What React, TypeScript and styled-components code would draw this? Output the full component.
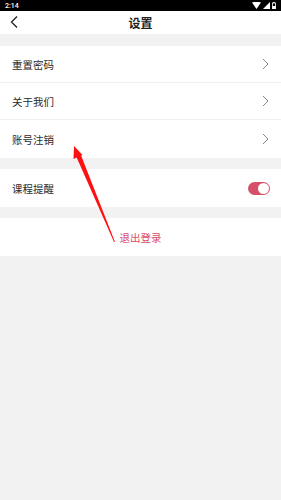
import React from "react";
import styled, { createGlobalStyle } from "styled-components";

const Global = createGlobalStyle`
  html, body { margin: 0; padding: 0; background: #f2f2f2; }
  body { font-family: "Noto Sans CJK SC", "Noto Sans", sans-serif; }
`;

const Page = styled.div`
  position: relative;
  width: 281px;
  height: 500px;
  background: #f2f2f2;
  overflow: hidden;
`;

const StatusBar = styled.div`
  height: 11px;
  background: #000;
  display: flex;
  align-items: center;
  justify-content: space-between;
  padding: 0 5px 0 5px;
  color: #fff;
  font-family: "Roboto", sans-serif;
  font-size: 7px;
  font-weight: 500;
`;

const StatusIcons = styled.div`
  display: flex;
  align-items: center;
  gap: 2px;
`;

const Header = styled.div`
  position: relative;
  height: 23px;
  background: #fff;
  display: flex;
  align-items: center;
  justify-content: center;
`;

const Title = styled.div`
  font-size: 12px;
  font-weight: 700;
  color: #222;
`;

const Back = styled.div`
  position: absolute;
  left: 10px;
  top: 5px;
  display: flex;
`;

const Gap = styled.div<{ h: number }>`
  height: ${(p) => p.h}px;
`;

const Group = styled.div`
  background: #fff;
`;

const Row = styled.div<{ h?: number; divider?: boolean; center?: boolean }>`
  height: ${(p) => p.h ?? 37}px;
  box-sizing: border-box;
  display: flex;
  align-items: center;
  justify-content: ${(p) => (p.center ? "center" : "space-between")};
  padding: 0 12px;
  border-bottom: ${(p) => (p.divider ? "1px solid #f0f0f0" : "none")};
  background: #fff;
`;

const Label = styled.span`
  font-size: 10.5px;
  color: #2b2b2b;
`;

const Logout = styled.span`
  font-size: 10.5px;
  color: #d94c6c;
`;

const Toggle = styled.div`
  width: 22px;
  height: 13px;
  border-radius: 7px;
  background: #d6506a;
  position: relative;
  margin-right: -1px;
`;

const Knob = styled.div`
  position: absolute;
  right: 1px;
  top: 1px;
  width: 11px;
  height: 11px;
  border-radius: 50%;
  background: #fff;
`;

const Arrow = styled.svg`
  position: absolute;
  left: 0;
  top: 0;
  pointer-events: none;
`;

const Chevron = () => (
  <svg width="7" height="12" viewBox="0 0 7 12">
    <path d="M1 1 L6 6 L1 11" fill="none" stroke="#888" strokeWidth="1" />
  </svg>
);

export default function App() {
  return (
    <>
      <Global />
      <Page>
        <StatusBar>
          <span>2:14</span>
          <StatusIcons>
            <svg width="9" height="7" viewBox="0 0 9 7">
              <path d="M0 0.5 Q4.5 -1 9 0.5 L4.5 7 Z" fill="#fff" />
            </svg>
            <svg width="7" height="7" viewBox="0 0 7 7">
              <path d="M7 0 L7 7 L0 7 Z" fill="#fff" />
            </svg>
            <svg width="4" height="7" viewBox="0 0 4 7">
              <rect x="1.2" y="0" width="1.6" height="1" fill="#fff" />
              <rect x="0.5" y="1" width="3" height="6" fill="none" stroke="#fff" strokeWidth="0.8" />
              <rect x="0.5" y="4" width="3" height="3" fill="#fff" />
            </svg>
          </StatusIcons>
        </StatusBar>
        <Header>
          <Back>
            <svg width="8" height="12" viewBox="0 0 8 12">
              <path d="M7 0.5 L1.5 6 L7 11.5" fill="none" stroke="#222" strokeWidth="1.3" />
            </svg>
          </Back>
          <Title>设置</Title>
        </Header>
        <Gap h={12} />
        <Group>
          <Row divider>
            <Label>重置密码</Label>
            <Chevron />
          </Row>
          <Row divider>
            <Label>关于我们</Label>
            <Chevron />
          </Row>
          <Row h={38}>
            <Label>账号注销</Label>
            <Chevron />
          </Row>
        </Group>
        <Gap h={11} />
        <Row h={38}>
          <Label>课程提醒</Label>
          <Toggle>
            <Knob />
          </Toggle>
        </Row>
        <Gap h={11} />
        <Row h={38} center>
          <Logout>退出登录</Logout>
        </Row>
        <Arrow width="281" height="500" viewBox="0 0 281 500">
          <polygon points="115,242 80.5,154 76,156 114,242" fill="#ff1010" />
          <polygon points="74,146 82.5,155 73.5,159" fill="#ff1010" />
        </Arrow>
      </Page>
    </>
  );
}
